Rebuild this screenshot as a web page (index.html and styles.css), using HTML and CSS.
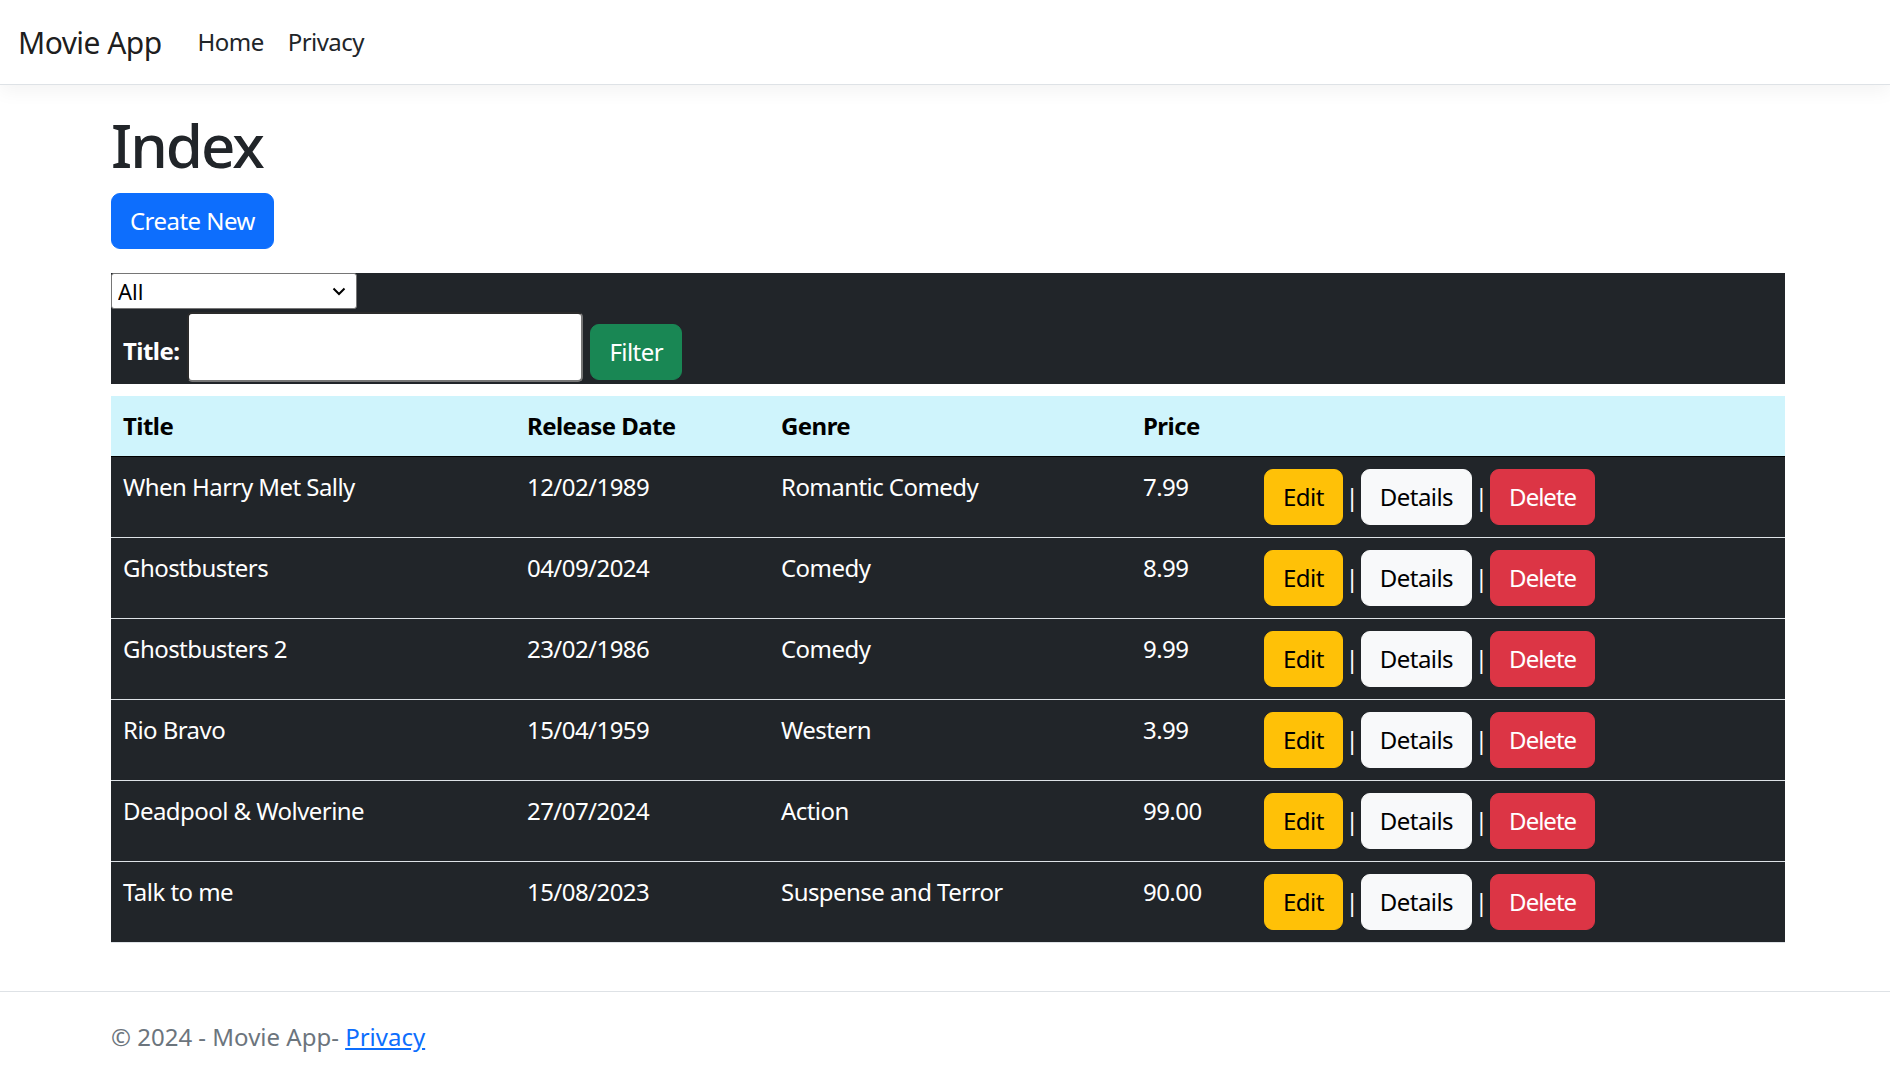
FILE: index.html
```html
<!DOCTYPE html>
<html lang="en">
<head>
<meta charset="utf-8">
<title>Index - Movie App</title>
<link rel="stylesheet" href="styles.css">
</head>
<body>
<header>
  <nav class="navbar">
    <a class="brand" href="#">Movie App</a>
    <ul class="nav">
      <li><a class="nav-link" href="#">Home</a></li>
      <li><a class="nav-link" href="#">Privacy</a></li>
    </ul>
  </nav>
</header>
<div class="container">
  <main class="main">
    <h1 class="page-title">Index</h1>
    <p class="create"><a class="btn btn-primary" href="#">Create New</a></p>
    <form class="filter">
      <select class="genre-select">
        <option>All</option>
        <option>Action</option>
        <option>Comedy</option>
        <option>Romantic Comedy</option>
        <option>Suspense and Terror</option>
        <option>Western</option>
      </select>
      <div class="search-row">
        <label class="search-label" for="title">Title:</label>
        <input class="search-input" id="title" type="text">
        <button class="btn btn-success filter-btn" type="button">Filter</button>
      </div>
    </form>
    <table class="movies">
      <thead>
        <tr>
          <th class="col-title">Title</th>
          <th class="col-date">Release Date</th>
          <th class="col-genre">Genre</th>
          <th class="col-price">Price</th>
          <th class="col-actions"></th>
        </tr>
      </thead>
      <tbody>
        <tr>
          <td>When Harry Met Sally</td><td>12/02/1989</td><td>Romantic Comedy</td><td>7.99</td>
          <td class="actions"><a class="btn btn-warning" href="#">Edit</a> | <a class="btn btn-light" href="#">Details</a> | <a class="btn btn-danger" href="#">Delete</a></td>
        </tr>
        <tr>
          <td>Ghostbusters</td><td>04/09/2024</td><td>Comedy</td><td>8.99</td>
          <td class="actions"><a class="btn btn-warning" href="#">Edit</a> | <a class="btn btn-light" href="#">Details</a> | <a class="btn btn-danger" href="#">Delete</a></td>
        </tr>
        <tr>
          <td>Ghostbusters 2</td><td>23/02/1986</td><td>Comedy</td><td>9.99</td>
          <td class="actions"><a class="btn btn-warning" href="#">Edit</a> | <a class="btn btn-light" href="#">Details</a> | <a class="btn btn-danger" href="#">Delete</a></td>
        </tr>
        <tr>
          <td>Rio Bravo</td><td>15/04/1959</td><td>Western</td><td>3.99</td>
          <td class="actions"><a class="btn btn-warning" href="#">Edit</a> | <a class="btn btn-light" href="#">Details</a> | <a class="btn btn-danger" href="#">Delete</a></td>
        </tr>
        <tr>
          <td>Deadpool &amp; Wolverine</td><td>27/07/2024</td><td>Action</td><td>99.00</td>
          <td class="actions"><a class="btn btn-warning" href="#">Edit</a> | <a class="btn btn-light" href="#">Details</a> | <a class="btn btn-danger" href="#">Delete</a></td>
        </tr>
        <tr>
          <td>Talk to me</td><td>15/08/2023</td><td>Suspense and Terror</td><td>90.00</td>
          <td class="actions"><a class="btn btn-warning" href="#">Edit</a> | <a class="btn btn-light" href="#">Details</a> | <a class="btn btn-danger" href="#">Delete</a></td>
        </tr>
      </tbody>
    </table>
  </main>
</div>
<footer class="footer">
  <div class="container">&copy; 2024 - Movie App- <a href="#">Privacy</a></div>
</footer>
</body>
</html>
```

FILE: styles.css
```css
* { box-sizing: border-box; }

body {
  margin: 0;
  font-family: "Noto Sans", "Open Sans", sans-serif;
  font-size: 24px;
  line-height: 36px;
  letter-spacing: -0.55px;
  color: #212529;
  background: #fff;
}

a { color: #0d6efd; }

/* navbar */
.navbar {
  display: flex;
  align-items: center;
  height: 85px;
  padding: 0 18px;
  background: #fff;
  border-bottom: 1.5px solid #dee2e6;
  box-shadow: 0 6px 18px rgba(0, 0, 0, 0.05);
  margin-bottom: 24px;
}
.brand {
  font-size: 30px;
  line-height: 45px;
  color: rgba(0, 0, 0, 0.9);
  text-decoration: none;
  margin-right: 24px;
}
.nav {
  display: flex;
  list-style: none;
  margin: 0;
  padding: 0;
}
.nav-link {
  display: block;
  padding: 12px;
  color: #212529;
  text-decoration: none;
}

/* layout */
.container {
  width: 1674px;
  margin-left: 111px;
}
.main { padding-bottom: 24px; }

.page-title {
  font-size: 60px;
  line-height: 72px;
  font-weight: 500;
  letter-spacing: -2px;
  margin: 0 0 12px;
}
.create { margin: 0 0 24px; }

/* buttons */
.btn {
  display: inline-block;
  padding: 9px 18px;
  font-family: inherit;
  font-size: 24px;
  line-height: 36px;
  letter-spacing: -0.55px;
  border: 1px solid transparent;
  border-radius: 9px;
  text-decoration: none;
  cursor: pointer;
  vertical-align: baseline;
}
.btn-primary { background: #0d6efd; border-color: #0d6efd; color: #fff; }
.btn-success { background: #198754; border-color: #198754; color: #fff; }
.btn-warning { background: #ffc107; border-color: #ffc107; color: #000; }
.btn-light { background: #f8f9fa; border-color: #f8f9fa; color: #000; }
.btn-danger { background: #dc3545; border-color: #dc3545; color: #fff; letter-spacing: -1px; }

/* filter form */
.filter {
  background: #212529;
  color: #fff;
  margin: 0 0 12px;
  padding-bottom: 2px;
}
.genre-select {
  display: block;
  width: 246px;
  height: 36px;
  margin: 0;
  padding: 0 30px 0 6px;
  font-family: "Noto Sans", sans-serif;
  font-size: 22px;
  color: #000;
  background: #fff url("data:image/svg+xml,%3Csvg xmlns='http://www.w3.org/2000/svg' width='14' height='9' viewBox='0 0 14 9'%3E%3Cpath d='M1.5 1.5 L7 7 L12.5 1.5' fill='none' stroke='%23000' stroke-width='2'/%3E%3C/svg%3E") no-repeat right 10px center;
  border: 1.5px solid #767676;
  border-radius: 3px;
  appearance: none;
  -webkit-appearance: none;
}
.search-row {
  display: flex;
  align-items: flex-start;
}
.search-label {
  font-weight: 700;
  padding-left: 12px;
  margin: 24px 8px 0 0;
}
.search-input {
  width: 396px;
  height: 70px;
  margin: 3px 0 0;
  padding: 0 6px;
  font-family: inherit;
  font-size: 24px;
  background: #fff;
  border-style: solid;
  border-width: 2px;
  border-color: #2b2b2b #767676 #767676 #2b2b2b;
  border-radius: 5px;
}
.filter-btn { margin: 15px 0 0 7px; }

/* table */
.movies {
  width: 100%;
  border-collapse: collapse;
  margin-bottom: 24px;
}
.movies th,
.movies td {
  padding: 12px;
  text-align: left;
  vertical-align: top;
}
.movies th {
  background: #cff4fc;
  color: #000;
  font-weight: 700;
  border-bottom: 1.5px solid #000;
}
.movies td {
  background: #212529;
  color: #fff;
  border-bottom: 1px solid #dee2e6;
}
.movies td.actions { word-spacing: -3px; }
.col-title { width: 404px; }
.col-date { width: 254px; }
.col-genre { width: 362px; }
.col-price { width: 121px; }

/* footer */
.footer {
  border-top: 1.5px solid #dee2e6;
  line-height: 90px;
  color: #6c757d;
  letter-spacing: 0;
  white-space: nowrap;
}
```
